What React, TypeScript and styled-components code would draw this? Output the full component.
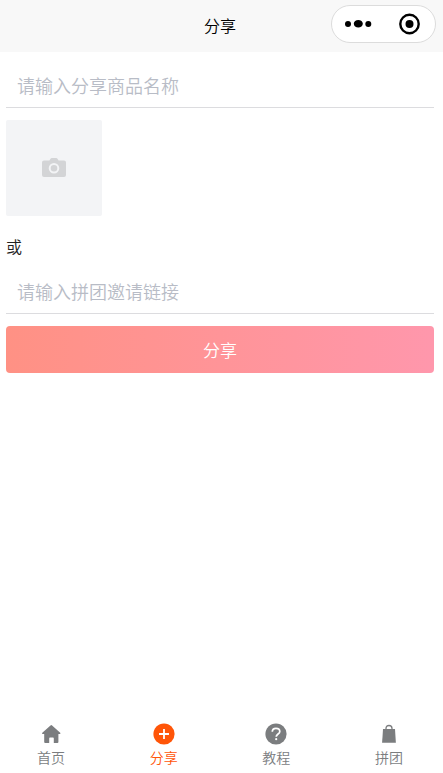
import React, { useState } from "react";
import styled, { createGlobalStyle } from "styled-components";

const GlobalStyle = createGlobalStyle`
  *, *::before, *::after { box-sizing: border-box; }
  body {
    margin: 0;
    background: #fff;
    color: #222;
    font-family: "Noto Sans CJK SC", sans-serif;
    font-size: 16px;
    font-weight: 350;
  }
  button, input { font-family: inherit; font-weight: inherit; }
`;

const Page = styled.div`
  display: flex;
  flex-direction: column;
  min-height: 100vh;
`;

const Header = styled.header`
  display: grid;
  grid-template-columns: 1fr auto 1fr;
  align-items: center;
  height: 52px;
  padding: 0 7px 4px 4px;
  background: #f8f8f8;
`;

const Title = styled.h1`
  grid-column: 2;
  margin: 0;
  padding-top: 2px;
  color: #000;
  font-size: 16px;
  font-weight: inherit;
  line-height: 24px;
`;

const Capsule = styled.div`
  justify-self: end;
  display: flex;
  width: 105px;
  height: 38px;
  border: 1px solid #dcdcdc;
  border-radius: 19px;
  background: #fff;
`;

const CapsuleButton = styled.button`
  flex: 1;
  display: flex;
  align-items: center;
  justify-content: center;
  padding: 0;
  border: 0;
  background: none;
  color: #000;
`;

const Form = styled.form`
  flex: 1;
  display: flex;
  flex-direction: column;
  gap: 12px;
  padding: 12px 9px 12px 6px;
`;

const TextField = styled.input`
  width: 100%;
  height: 44px;
  padding: 0 11px 2px;
  border: 0;
  border-bottom: 1px solid #dcdcdf;
  border-radius: 0;
  outline: 0;
  background: transparent;
  color: #222;
  font-size: 18px;
  &::placeholder { color: #b8bcc6; opacity: 1; }
`;

const UploadButton = styled.button`
  display: flex;
  align-items: center;
  justify-content: center;
  width: 96px;
  height: 96px;
  padding: 0;
  border: 0;
  border-radius: 2px;
  background: #f3f4f6;
  color: #d3d4d6;
`;

const Divider = styled.p`
  margin: 0;
  padding-top: 6px;
  font-size: 16px;
  line-height: 24px;
`;

const SubmitButton = styled.button`
  height: 47px;
  padding: 0;
  border: 0;
  border-radius: 4px;
  background: linear-gradient(90deg, #ff9184, #ff97ac);
  color: #fff;
  font-size: 17px;
`;

const TabBar = styled.nav`
  display: flex;
  justify-content: space-between;
  padding: 0 40px 6px 37px;
`;

const Tab = styled.a<{ $active?: boolean }>`
  display: flex;
  flex-direction: column;
  align-items: center;
  gap: 2px;
  color: ${(p) => (p.$active ? "#ff5508" : "#7b7d7f")};
  font-size: 14px;
  line-height: 20px;
  text-decoration: none;
`;

const MoreIcon = () => (
  <svg width="28" height="22" viewBox="0 0 28 22" fill="currentColor" aria-hidden="true">
    <circle cx="4" cy="11" r="3" />
    <ellipse cx="14.3" cy="10.8" rx="4.5" ry="3.8" />
    <circle cx="24.3" cy="11" r="3" />
  </svg>
);

const CloseIcon = () => (
  <svg width="22" height="22" viewBox="0 0 22 22" aria-hidden="true">
    <circle cx="11.5" cy="11" r="9.2" fill="none" stroke="currentColor" strokeWidth="2.4" />
    <circle cx="11.5" cy="11" r="4" fill="currentColor" />
  </svg>
);

const CameraIcon = () => (
  <svg width="24" height="20" viewBox="0 0 24 20" aria-hidden="true">
    <path
      fill="currentColor"
      d="M2 2.500h5.400L8.500.700Q9 0 9.800 0h4.400q.8 0 1.300.7l1.100 1.800H22q2 0 2 2V17q0 2-2 2H2q-2 0-2-2V4.500q0-2 2-2Z"
    />
    <circle cx="12" cy="10.300" r="4.300" fill="none" stroke="#f3f4f6" strokeWidth="2" />
  </svg>
);

const HomeIcon = () => (
  <svg width="22" height="22" viewBox="0 0 22 22" fill="currentColor" aria-hidden="true">
    <path d="M10.500 2.400q.8-.7 1.600 0l8.100 7.400q.9.900-.4 1.200H18.400v8q0 1-1 1h-3.600v-4.600q0-.8-.8-.8H10q-.8 0-.8.8V20H5.200q-1 0-1-1v-8H2.700Q1.400 10.700 2.300 9.800Z" />
  </svg>
);

const PlusIcon = () => (
  <svg width="22" height="22" viewBox="0 0 22 22" aria-hidden="true">
    <circle cx="11" cy="11" r="10.6" fill="currentColor" />
    <path d="M11 6v10M6 11h10" stroke="#fff" strokeWidth="1.8" />
  </svg>
);

const HelpIcon = () => (
  <svg width="22" height="22" viewBox="0 0 22 22" aria-hidden="true">
    <circle cx="11" cy="11" r="10.6" fill="currentColor" />
    <path
      d="M7.300 8.700C7.300 6.500 8.800 5.300 11 5.300s3.800 1.200 3.800 3.100c0 2.500-3.600 2.700-3.600 5.400"
      fill="none"
      stroke="#fff"
      strokeWidth="1.700"
    />
    <circle cx="11.200" cy="16.200" r="1.100" fill="#fff" />
  </svg>
);

const BagIcon = () => (
  <svg width="22" height="22" viewBox="0 0 22 22" aria-hidden="true">
    <path d="M8 7V5.500q0-3 3-3t3 3V7" fill="none" stroke="currentColor" strokeWidth="1.300" />
    <path d="M5 6h12l.9 13.800H4.100Z" fill="currentColor" />
  </svg>
);

const tabs = [
  { id: "home", label: "首页", Icon: HomeIcon },
  { id: "share", label: "分享", Icon: PlusIcon },
  { id: "guide", label: "教程", Icon: HelpIcon },
  { id: "group", label: "拼团", Icon: BagIcon },
];

export default function App() {
  const [name, setName] = useState("");
  const [link, setLink] = useState("");

  return (
    <>
      <GlobalStyle />
      <Page>
        <Header>
          <Title>分享</Title>
          <Capsule>
            <CapsuleButton type="button" aria-label="更多"><MoreIcon /></CapsuleButton>
            <CapsuleButton type="button" aria-label="关闭"><CloseIcon /></CapsuleButton>
          </Capsule>
        </Header>
        <Form onSubmit={(e) => e.preventDefault()}>
          <TextField
            aria-label="分享商品名称"
            placeholder="请输入分享商品名称"
            value={name}
            onChange={(e) => setName(e.target.value)}
          />
          <UploadButton type="button" aria-label="上传图片"><CameraIcon /></UploadButton>
          <Divider>或</Divider>
          <TextField
            aria-label="拼团邀请链接"
            placeholder="请输入拼团邀请链接"
            value={link}
            onChange={(e) => setLink(e.target.value)}
          />
          <SubmitButton type="submit">分享</SubmitButton>
        </Form>
        <TabBar>
          {tabs.map(({ id, label, Icon }) => (
            <Tab key={id} href={`#${id}`} $active={id === "share"}>
              <Icon />
              {label}
            </Tab>
          ))}
        </TabBar>
      </Page>
    </>
  );
}
